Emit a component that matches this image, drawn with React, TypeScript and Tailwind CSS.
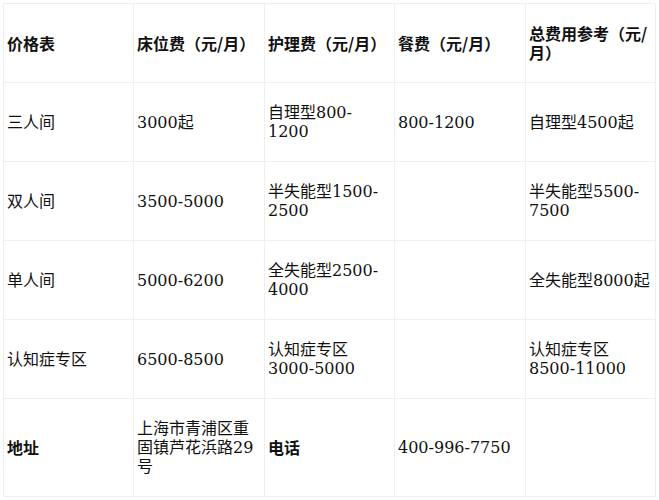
import React from "react";

const rows: { cells: string[]; bold?: boolean[] }[] = [
  { cells: ["价格表", "床位费（元/月）", "护理费（元/月）", "餐费（元/月）", "总费用参考（元/月）"], bold: [true, true, true, true, true] },
  { cells: ["三人间", "3000起", "自理型800-1200", "800-1200", "自理型4500起"] },
  { cells: ["双人间", "3500-5000", "半失能型1500-2500", "", "半失能型5500-7500"] },
  { cells: ["单人间", "5000-6200", "全失能型2500-4000", "", "全失能型8000起"] },
  { cells: ["认知症专区", "6500-8500", "认知症专区3000-5000", "", "认知症专区8500-11000"] },
  { cells: ["地址", "上海市青浦区重固镇芦花浜路29号", "电话", "400-996-7750", ""], bold: [true, false, true, false, false] },
];

export default function App() {
  return (
    <div className="bg-white w-[659px] h-[500px] pt-[3px] pl-[3px] font-['DejaVu_Serif','Noto_Sans_CJK_SC',serif]">
      <div className="grid grid-cols-[130px_131px_130px_131px_130px] grid-rows-[79px_79px_79px_79px_79px_98px] w-[652px] border-l border-t border-[#efefef] text-[16px] leading-[19px] text-[#111]">
        {rows.map((r, i) =>
          r.cells.map((c, j) => {
            const b = r.bold && r.bold[j];
            return (
              <div
                key={i + "-" + j}
                className={
                  b
                    ? "border-r border-b border-[#efefef] flex items-center pl-[3px] pr-[2px] font-bold font-['Noto_Sans_CJK_SC',sans-serif]"
                    : "border-r border-b border-[#efefef] flex items-center pl-[3px] pr-[2px]"
                }
              >
                <span>{c}</span>
              </div>
            );
          })
        )}
      </div>
    </div>
  );
}
